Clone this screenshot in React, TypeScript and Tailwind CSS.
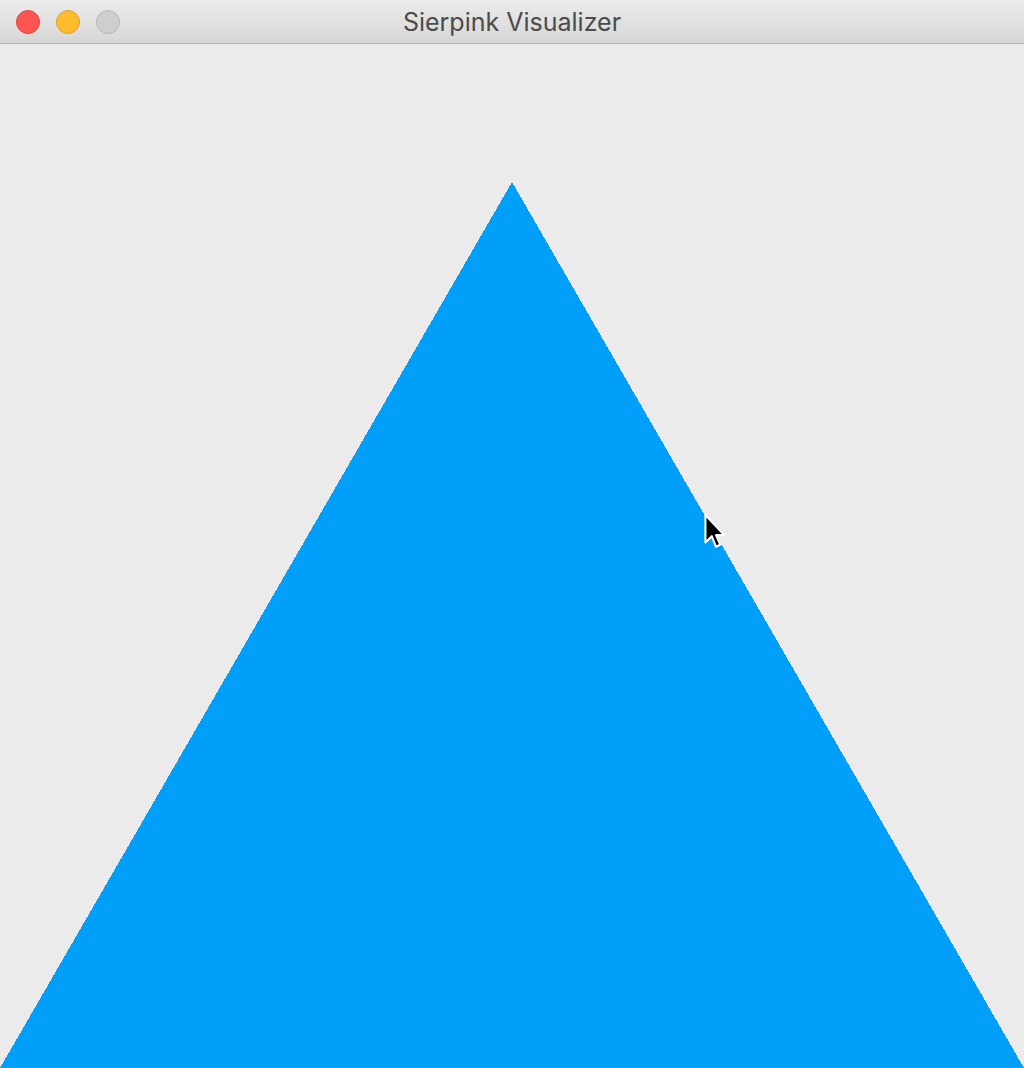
export default function App() {
  return (
    <div className="w-[1024px] h-[1068px] flex flex-col overflow-hidden bg-[#ebebeb]">
      {/* Title bar */}
      <div className="relative h-[44px] shrink-0 flex items-center justify-center rounded-t-[10px] border-b border-[#b5b5b5] bg-gradient-to-b from-[#ececec] to-[#d6d6d6]">
        <div className="absolute left-[16px] top-[10px] flex gap-[16px]">
          <span className="w-[24px] h-[24px] rounded-full bg-[#fd5652] border border-[#e0443e]" />
          <span className="w-[24px] h-[24px] rounded-full bg-[#fdbc2e] border border-[#dfa023]" />
          <span className="w-[24px] h-[24px] rounded-full bg-[#cecece] border border-[#b8b8b8]" />
        </div>
        <span className="text-[25px] leading-none mt-[2px] text-[#4b4b4b] font-['Inter','Liberation_Sans',sans-serif]">
          Sierpink Visualizer
        </span>
      </div>

      {/* Canvas */}
      <div className="relative flex-1">
        <svg width="1024" height="1024" viewBox="0 0 1024 1024" className="block" shapeRendering="crispEdges">
          <polygon points="512,138 1024,1024 0,1024" fill="#00a0fa" />
        </svg>
        {/* mouse cursor */}
        <svg
          className="absolute left-[703px] top-[469px]"
          width="26"
          height="38"
          viewBox="0 0 24 36"
        >
          <path
            d="M2 2 L2 28 L8 22 L12 32 L16 30 L12 21 L20 21 Z"
            fill="#000"
            stroke="#fff"
            strokeWidth="2"
            strokeLinejoin="round"
          />
        </svg>
      </div>
    </div>
  )
}
